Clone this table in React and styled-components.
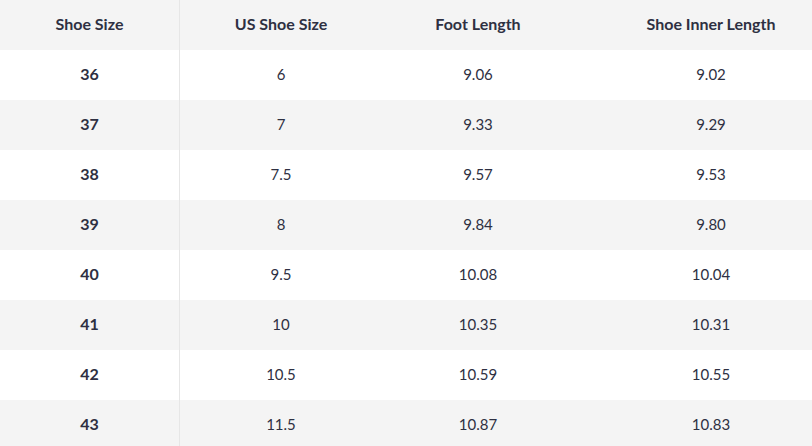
import React from "react";
import styled, { createGlobalStyle } from "styled-components";

const Global = createGlobalStyle`
  html, body { margin: 0; padding: 0; background: #ffffff; }
  body { font-family: Lato, "Noto Sans", sans-serif; overflow: hidden; }
`;

const Viewport = styled.div`
  width: 812px;
  height: 446px;
  overflow: hidden;
`;

const Table = styled.div`
  display: grid;
  grid-template-columns: 180px 202px 192px 274px;
  width: 848px;
  color: #2e3042;
`;

const Row = styled.div`
  display: contents;
`;

const Cell = styled.div`
  box-sizing: border-box;
  height: 50px;
  display: flex;
  align-items: center;
  justify-content: center;
  padding-bottom: 3px;
  background: ${(p) => (p.$shaded ? "#f4f4f4" : "#ffffff")};
  font-weight: ${(p) => (p.$bold ? 700 : 400)};
  font-size: ${(p) => (p.$bold ? "16px" : "15px")};
  border-right: ${(p) => (p.$divider ? "1px solid #e6e6e6" : "none")};
`;

const headers = ["Shoe Size", "US Shoe Size", "Foot Length", "Shoe Inner Length"];

const rows = [
  ["36", "6", "9.06", "9.02"],
  ["37", "7", "9.33", "9.29"],
  ["38", "7.5", "9.57", "9.53"],
  ["39", "8", "9.84", "9.80"],
  ["40", "9.5", "10.08", "10.04"],
  ["41", "10", "10.35", "10.31"],
  ["42", "10.5", "10.59", "10.55"],
  ["43", "11.5", "10.87", "10.83"],
];

export default function App() {
  return (
    <Viewport>
      <Global />
      <Table>
        <Row>
          {headers.map((h, i) => (
            <Cell key={h} $shaded $bold $divider={i === 0}>
              {h}
            </Cell>
          ))}
        </Row>
        {rows.map((r, ri) => (
          <Row key={r[0]}>
            {r.map((v, i) => (
              <Cell key={i} $shaded={ri % 2 === 1} $bold={i === 0} $divider={i === 0}>
                {v}
              </Cell>
            ))}
          </Row>
        ))}
      </Table>
    </Viewport>
  );
}
